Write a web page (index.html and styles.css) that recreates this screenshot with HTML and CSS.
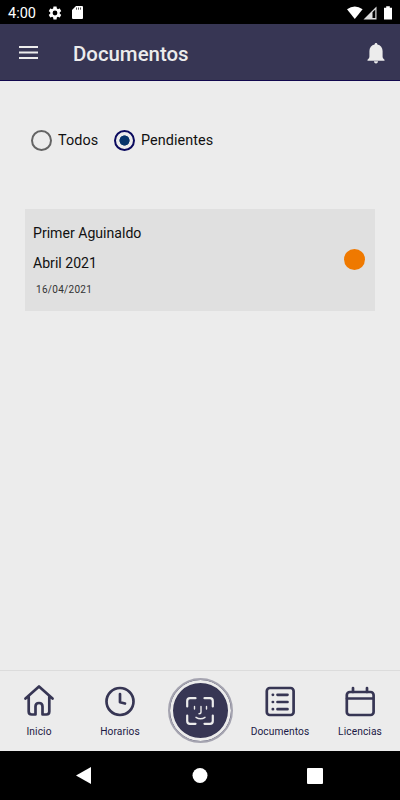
FILE: index.html
```html
<!DOCTYPE html>
<html lang="es">
<head>
<meta charset="utf-8">
<title>Documentos</title>
<link rel="stylesheet" href="styles.css">
</head>
<body>
<div class="app">
  <div class="status">
    <span class="clock">4:00</span>
    <svg class="gear" width="14" height="14" viewBox="1.5 1.5 21 21"><path fill="#fff" d="M19.14 12.94c.04-.3.06-.61.06-.94 0-.32-.02-.64-.07-.94l2.03-1.58c.18-.14.23-.41.12-.61l-1.92-3.32c-.12-.22-.37-.29-.59-.22l-2.39.96c-.5-.38-1.03-.7-1.62-.94l-.36-2.54c-.04-.24-.24-.41-.48-.41h-3.84c-.24 0-.43.17-.47.41l-.36 2.54c-.59.24-1.13.57-1.62.94l-2.39-.96c-.22-.08-.47 0-.59.22L2.74 8.87c-.12.21-.08.47.12.61l2.03 1.58c-.05.3-.09.63-.09.94s.02.64.07.94l-2.03 1.58c-.18.14-.23.41-.12.61l1.92 3.32c.12.22.37.29.59.22l2.39-.96c.5.38 1.03.7 1.62.94l.36 2.54c.05.24.24.41.48.41h3.84c.24 0 .44-.17.47-.41l.36-2.54c.59-.24 1.13-.56 1.62-.94l2.39.96c.22.08.47 0 .59-.22l1.92-3.32c.12-.22.07-.47-.12-.61l-2.01-1.58zM12 15.6A3.6 3.6 0 1 1 12 8.4a3.6 3.6 0 0 1 0 7.2z"/></svg>
    <svg class="card-icon" width="11" height="13" viewBox="0 0 11 13"><path fill="#fff" d="M4 0h6a1 1 0 0 1 1 1v11a1 1 0 0 1-1 1H1a1 1 0 0 1-1-1V4z"/><path stroke="#555" stroke-width="1" d="M4.5 1.500v2.200M6.500 1.500v2.200M8.500 1.500v2.200"/></svg>
    <svg class="signals" width="46" height="14" viewBox="0 0 46 14"><path fill="#fff" d="M0 3.200Q7.800-2.200 15.600 3.200L7.800 13z"/><path fill="#ddd" d="M16.500 13.500 29.500.5v13z"/><path fill="#000" d="M25.500 6.200 28.300 3.500V12h-2.800z"/><path fill="#fff" d="M39.200.3h3.600v1.400H45v11.800h-8V1.700h2.200z"/></svg>
  </div>
  <header class="bar">
    <svg width="19" height="13" viewBox="0 0 19 13"><path stroke="#ececec" stroke-width="2" d="M0 1h19M0 6.500h19M0 12h19"/></svg>
    <h1>Documentos</h1>
    <svg class="bell" width="18" height="21" viewBox="0 0 18 21"><path fill="#ececec" d="M9 0c.9 0 1.400.6 1.400 1.500C13.600 2.200 15.600 4.700 15.600 8v5.500c0 1.400.7 2.200 1.900 3.200v1H.5v-1c1.200-1 1.900-1.800 1.900-3.200V8c0-3.300 2-5.800 5.200-6.500C7.600.6 8.100 0 9 0zM7 18.300h4c0 1.300-.8 2.200-2 2.200s-2-.9-2-2.200z"/></svg>
  </header>
  <main>
    <div class="filters">
      <span class="radio"></span><span class="option todos">Todos</span>
      <span class="radio on"></span><span class="option">Pendientes</span>
    </div>
    <article class="doc">
      <div class="info">
        <p>Primer Aguinaldo</p>
        <p>Abril 2021</p>
        <time>16/04/2021</time>
      </div>
      <span class="dot"></span>
    </article>
  </main>
  <nav class="tabs">
    <a class="tab first"><svg width="30" height="32" viewBox="0 0 30 32"><path d="M1.500 13.500 15 1.500l13.500 12M4.700 11v15.500q0 3 3 3h3.800v-8q0-3.500 3.500-3.500t3.500 3.500v8h3.800q3 0 3-3V11"/></svg><span>Inicio</span></a>
    <a class="tab"><svg width="30" height="32" viewBox="0 0 30 32"><circle cx="15" cy="16.500" r="13.500"/><path d="M15 9v8.200l5 1.300"/></svg><span>Horarios</span></a>
    <a class="tab center"><span class="face"><svg width="28" height="28" viewBox="0 0 28 28"><path d="M1.200 9.500V4q0-2.800 2.800-2.800h5.500M18.500 1.200H24q2.800 0 2.800 2.800v5.500M26.800 18.500V24q0 2.800-2.800 2.800h-5.500M9.500 26.800H4q-2.800 0-2.800-2.800v-5.500"/><path class="thin" d="M8.500 9.500v2.500M20.500 9.500v2.500M15 9.500v5.500q0 1.800-2 1.800M10 20.300q4.500 3 9 0"/></svg></span></a>
    <a class="tab"><svg width="30" height="32" viewBox="0 0 30 32"><rect x="1.800" y="3" width="26.800" height="27" rx="3"/><path d="M12.500 9.800h10M12.500 17h10M12.500 24.200h10M7.800 9.800h.2M7.800 17h.2M7.800 24.200h.2"/></svg><span>Documentos</span></a>
    <a class="tab"><svg width="30" height="32" viewBox="0 0 30 32"><rect x="1.800" y="7" width="26.800" height="23" rx="3"/><path d="M8 7V3M22 7V3M2 13.500h26"/></svg><span>Licencias</span></a>
  </nav>
  <div class="system">
    <svg width="400" height="49" viewBox="0 0 400 49"><path fill="#fff" d="M76 24.500 91 16v17z"/><circle cx="200" cy="24.500" r="7.500" fill="#fff"/><rect x="307" y="17" width="16" height="16" rx="1" fill="#fff"/></svg>
  </div>
</div>
</body>
</html>
```
FILE: styles.css
```css
* { box-sizing: border-box; }
body { margin: 0; background: #ececec; font-family: Roboto, sans-serif; color: #111; }
.app { width: 400px; height: 800px; display: flex; flex-direction: column; overflow: hidden; }
svg { display: block; flex: none; }
.status { height: 24px; background: #000; color: #fff; display: flex; align-items: center; padding: 1px 8px 0; }
.clock { width: 40px; margin-top: 1px; font-size: 14.5px; }
.card-icon { margin-left: 10px; }
.signals { margin-left: auto; margin-right: -1px; }
.bar { height: 57px; background: #373654; border-bottom: 1px solid #12084e; display: flex; align-items: center; padding: 0 15px 0 19px; }
.bar h1 { margin: 4px 0 0 35px; font-size: 20.4px; line-height: 24px; font-weight: 500; color: #ececec; }
.bell { margin-left: auto; margin-top: 2px; }
main { flex: 1; padding: 48px 25px 0; }
.filters { display: flex; align-items: center; height: 22px; padding-left: 6px; font-size: 14.4px; letter-spacing: .08px; }
.radio { width: 21px; height: 21px; border: 2px solid #646464; border-radius: 50%; margin-right: 6px; flex: none; }
.radio.on { border-color: #0a0a5e; background: radial-gradient(circle, #06346b 4.800px, transparent 5.400px); }
.todos { width: 56px; }
.doc { height: 102px; margin-top: 58px; padding: 9px 10px 0 8px; background: #e0e0e0; display: flex; justify-content: space-between; }
.doc p { margin: 0; font-size: 14.1px; line-height: 30px; }
.doc time { display: block; margin-left: 3px; font-size: 10px; line-height: 24px; letter-spacing: .3px; color: #333; }
.dot { width: 21px; height: 21px; margin-top: 31px; border-radius: 50%; background: #ef7900; }
.tabs { height: 81px; border-top: 1px solid #dcdcdc; display: grid; grid-template-columns: repeat(5, 1fr); }
.tab { display: flex; flex-direction: column; align-items: center; padding-top: 14px; font-size: 10.2px; color: #1b1945; }
.tab > span { margin-top: 7px; line-height: 16px; letter-spacing: .1px; }
.tab svg { fill: none; stroke: #373654; stroke-width: 2.7; stroke-linecap: round; stroke-linejoin: round; }
.first { padding-right: 2px; }
.center { padding-top: 7px; }
.tab > .face { width: 65px; height: 65px; margin: 0; border-radius: 50%; border: 2px solid #a5a4b0; background: #373654; box-shadow: inset 0 0 0 3px #ececec; display: grid; place-items: center; }
.tab .face svg { stroke: #ececec; stroke-width: 2.2; }
.face .thin { stroke-width: 1.4; }
.system { height: 49px; background: #000; }
```
